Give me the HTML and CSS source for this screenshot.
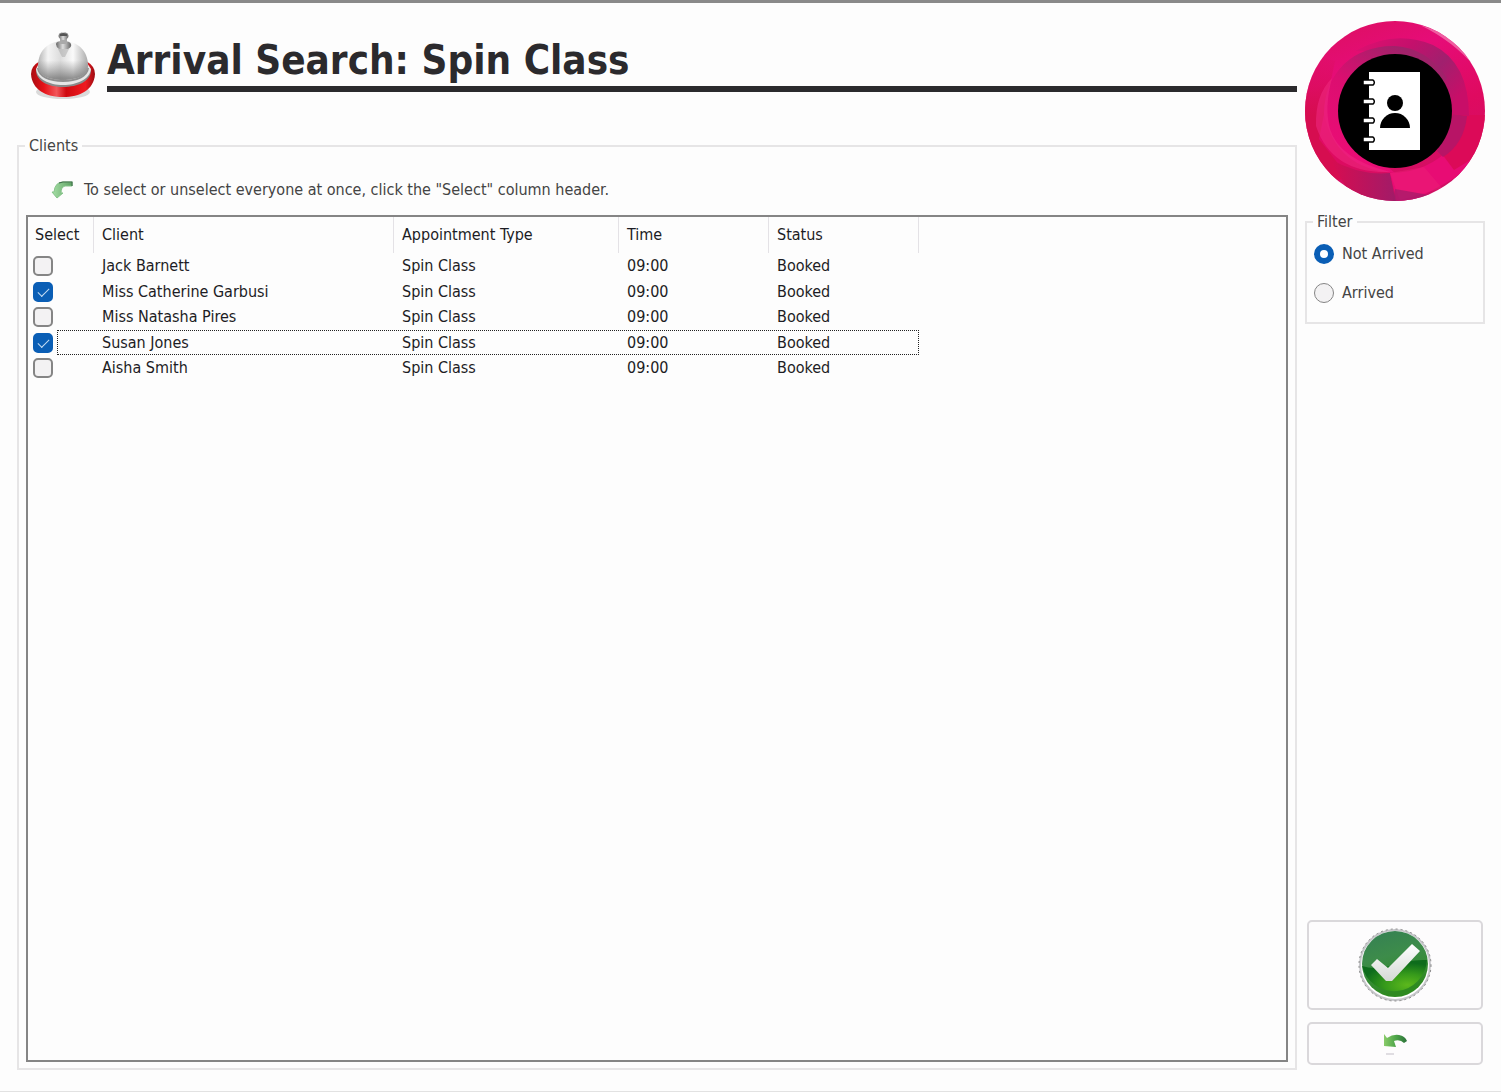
FILE: index.html
```html
<!DOCTYPE html>
<html lang="en">
<head>
<meta charset="utf-8">
<title>Arrival Search: Spin Class</title>
<link rel="stylesheet" href="styles.css">
</head>
<body>
<form class="window">
  <main class="content">
    <header class="heading">
      <svg class="bell" viewBox="0 0 70 72" aria-hidden="true">
        <defs>
          <linearGradient id="base" x1="0" x2="1"><stop offset="0" stop-color="#a80c12"/><stop offset=".2" stop-color="#e61218"/><stop offset=".4" stop-color="#f2565a"/><stop offset=".55" stop-color="#cf0a10"/><stop offset=".85" stop-color="#f01a20"/><stop offset="1" stop-color="#9c0c12"/></linearGradient>
          <linearGradient id="dome" x1="0" x2="1"><stop offset="0" stop-color="#b4b4b4"/><stop offset=".2" stop-color="#f4f4f4"/><stop offset=".45" stop-color="#dcdcdc"/><stop offset=".7" stop-color="#fafafa"/><stop offset="1" stop-color="#aaa"/></linearGradient>
          <linearGradient id="shade" x1="0" y1="0" x2="0" y2="1"><stop offset=".5" stop-color="#777" stop-opacity="0"/><stop offset=".95" stop-color="#666" stop-opacity=".7"/></linearGradient>
          <linearGradient id="knob" x1="0" x2="1"><stop offset="0" stop-color="#666"/><stop offset=".45" stop-color="#ddd"/><stop offset="1" stop-color="#666"/></linearGradient>
        </defs>
        <ellipse cx="35" cy="62" rx="27" ry="7" fill="#999" opacity=".35"/>
        <path d="M12 31Q3 36 3 44C4 60 18 67 35 67s31-7 32-23q0-8-9-13z" fill="url(#base)"/>
        <path d="M8 40c0 11 12 17 27 17s28-6 28-17l-4-6H11z" fill="#8a8a8a"/>
        <path d="M8 39c1 10 13 16 27 16s27-6 28-16l-4-6H11z" fill="#e6e6e6"/>
        <path d="M9 38c1 9 12 14 26 14s25-5 26-14z" fill="#8f8f8f"/>
        <path d="M10 36C10 20 21 11 35 11s25 9 25 25c0 9-11 14-25 14S10 45 10 36z" fill="url(#dome)"/>
        <path d="M10 36C10 20 21 11 35 11s25 9 25 25c0 9-11 14-25 14S10 45 10 36z" fill="url(#shade)"/>
        <path d="M30 19h11l-4 8h-3z" fill="#999" opacity=".4"/>
        <path d="M28 14q0-3 7-3t8 3-3 5h-9q-3-2-3-5z" fill="url(#knob)"/>
        <path d="M32 8h7v6h-7z" fill="#aaa"/>
        <ellipse cx="35.500" cy="6" rx="5" ry="4" fill="url(#knob)"/>
        <path d="M32 4q3-2 7 0v2h-7z" fill="#555"/>
      </svg>
      <h1 class="title">Arrival Search: Spin Class</h1>
    </header>
    <fieldset class="group clients">
      <legend>Clients</legend>
      <p class="hint">
        <svg class="hint-arrow" viewBox="0 0 24 20" aria-hidden="true">
          <defs><linearGradient id="bend" x1="0" x2="1"><stop offset="0" stop-color="#a6dfa6"/><stop offset="1" stop-color="#5da263"/></linearGradient></defs>
          <path d="M22 2v4h-7q-4 1-4 7h2l-6 5-5-6h2Q5 2 13 2z" fill="url(#bend)" stroke="#86c48a" stroke-width="1"/>
          <path d="M9 3l4-1h9v4" fill="none" stroke="#3e6f48" stroke-width="1.2"/>
        </svg>
        To select or unselect everyone at once, click the "Select" column header.
      </p>
      <div class="listbox">
        <table class="list">
          <colgroup><col class="col-select"><col class="col-client"><col class="col-type"><col class="col-time"><col class="col-status"></colgroup>
          <thead>
            <tr><th scope="col">Select</th><th scope="col">Client</th><th scope="col">Appointment Type</th><th scope="col">Time</th><th scope="col">Status</th></tr>
          </thead>
          <tbody>
            <tr><td><input type="checkbox" id="c1"></td><td><label for="c1">Jack Barnett</label></td><td>Spin Class</td><td>09:00</td><td>Booked</td></tr>
            <tr><td><input type="checkbox" id="c2" checked></td><td><label for="c2">Miss Catherine Garbusi</label></td><td>Spin Class</td><td>09:00</td><td>Booked</td></tr>
            <tr><td><input type="checkbox" id="c3"></td><td><label for="c3">Miss Natasha Pires</label></td><td>Spin Class</td><td>09:00</td><td>Booked</td></tr>
            <tr class="focused"><td><input type="checkbox" id="c4" checked></td><td><label for="c4">Susan Jones</label></td><td>Spin Class</td><td>09:00</td><td>Booked</td></tr>
            <tr><td><input type="checkbox" id="c5"></td><td><label for="c5">Aisha Smith</label></td><td>Spin Class</td><td>09:00</td><td>Booked</td></tr>
          </tbody>
        </table>
      </div>
    </fieldset>
  </main>
  <aside class="side">
    <svg class="badge" viewBox="0 0 180 180" role="img" aria-label="Contacts">
      <defs>
        <clipPath id="disc"><circle cx="90" cy="90" r="90"/></clipPath>
        <linearGradient id="pink" x1=".1" y1="0" x2=".5" y2="1"><stop offset="0" stop-color="#dc1060"/><stop offset=".3" stop-color="#e60c78"/><stop offset=".65" stop-color="#df0a60"/><stop offset="1" stop-color="#d01064"/></linearGradient>
        <linearGradient id="swirl" x1="0" y1="0" x2="1" y2=".6"><stop offset="0" stop-color="#e01070"/><stop offset=".4" stop-color="#c4106c"/><stop offset=".7" stop-color="#a0206e"/><stop offset="1" stop-color="#c80e68"/></linearGradient>
        <linearGradient id="left" x1="0" y1="1" x2=".6" y2="0"><stop offset="0" stop-color="#f00c78"/><stop offset=".6" stop-color="#dc0e70"/><stop offset="1" stop-color="#a0226a"/></linearGradient>
        <linearGradient id="foot" x1="0" y1="0" x2="1" y2="0"><stop offset="0" stop-color="#d80c50"/><stop offset="1" stop-color="#a11b68"/></linearGradient>
        <linearGradient id="edge" x1="0" y1="0" x2="0" y2="1"><stop offset="0" stop-color="#d60d50" stop-opacity="0"/><stop offset=".5" stop-color="#d60d50"/></linearGradient>
      </defs>
      <g clip-path="url(#disc)">
        <path d="M0 0h180v180H0z" fill="url(#pink)"/>
        <path d="M0 30L30 40 14 118 45 158 10 160 0 120z" fill="url(#edge)"/>
        <path d="M25 138q30 17 60 14l6 30H50z" fill="url(#foot)"/>
        <path d="M85 152q38 0 62-27l25 20-70 38-10-2z" fill="#e80c74"/>
        <path d="M85 152l34-6 18 21-42 12z" fill="#ed2378" opacity=".4"/>
        <path d="M88 182l2-14 34 6-20 8z" fill="#a01c68" opacity=".7"/>
        <path d="M148 94h32v36l-31 19-12-16z" fill="#dc0a58"/>
        <path d="M148 93l14 2q-3 28-24 41l-6-6z" fill="#b81466"/>
        <path d="M50 30Q90 8 128 24q36 18 36 71l-18-2-46-62z" fill="url(#swirl)"/>
        <path d="M19 92C20 50 50 24 90 25q32 2 52 32l-15 20-80 40 43 35Q30 148 19 92z" fill="url(#left)"/>
        <path d="M11 105Q10 74 27 57q-8 30-2 51 9 30 60 43-58 2-74-46z" fill="#ef2a82" opacity=".55"/>
        <path d="M115 4q40 11 55 42-22-26-55-42z" fill="#ef66a5" opacity=".9"/>
      </g>
      <circle cx="90" cy="90" r="57"/>
      <path d="M64 51h51v78H64z" fill="#fff"/>
      <g fill="#fff" stroke="#000" stroke-width="1.5">
        <path d="M58 59h10a3 3 0 0 1 0 5H58zM58 78h10a3 3 0 0 1 0 5H58zM58 97h10a3 3 0 0 1 0 5H58zM58 116h10a3 3 0 0 1 0 5H58z"/>
      </g>
      <circle cx="90" cy="82" r="8"/>
      <path d="M75 107a15 15 0 0 1 30 0z"/>
    </svg>
    <fieldset class="group filter">
      <legend>Filter</legend>
      <label class="choice"><input type="radio" name="filter" checked>Not Arrived</label>
      <label class="choice"><input type="radio" name="filter">Arrived</label>
    </fieldset>
    <div class="actions">
      <button class="action confirm" type="button" aria-label="Confirm">
        <svg width="74" height="74" viewBox="0 0 74 74" aria-hidden="true">
          <defs>
            <linearGradient id="green" x1="0" y1="0" x2=".3" y2="1"><stop offset="0" stop-color="#347f55"/><stop offset=".45" stop-color="#3d8c4a"/><stop offset="1" stop-color="#2e8a20"/></linearGradient>
            <radialGradient id="glow" cx=".7" cy=".8" r=".7"><stop offset="0" stop-color="#5cb81c"/><stop offset=".5" stop-color="#369a1b"/><stop offset="1" stop-color="#0e6c1c"/></radialGradient>
            <linearGradient id="tick" x1="0" y1="0" x2="0" y2="1"><stop offset="0" stop-color="#fff"/><stop offset="1" stop-color="#d5d9d5"/></linearGradient>
          </defs>
          <circle cx="37" cy="37" r="35" fill="#fff" stroke="#c6c6ca" stroke-width="2"/>
          <circle cx="37" cy="37" r="36" fill="none" stroke="#888" stroke-width="1" stroke-dasharray="2 3"/>
          <circle cx="37" cy="36" r="33" fill="url(#green)"/>
          <path d="M4 38q12 4 28 0 20-7 37-6A33 33 0 0 1 4 38z" fill="url(#glow)"/>
          <path d="M13 37l6-6 11 9 24-24 8 7-28 30h-6z" fill="url(#tick)"/>
        </svg>
      </button>
      <button class="action back" type="button" aria-label="Back">
        <svg width="26" height="24" viewBox="0 0 26 24" aria-hidden="true">
          <defs><linearGradient id="undo" x1="0" x2="1"><stop offset="0" stop-color="#8acb6a"/><stop offset=".5" stop-color="#4fa64a"/><stop offset="1" stop-color="#2b7139"/></linearGradient></defs>
          <path d="M2 2l3 4q6-4 12-3 6 1 8 6l-3 2q-4-4-10-2l2 6-12-1z" fill="url(#undo)"/>
          <path d="M4 22h8" stroke="#e0dde2" stroke-width="2"/>
        </svg>
      </button>
    </div>
  </aside>
</form>
</body>
</html>
```
FILE: styles.css
```css
* {
  box-sizing: border-box;
}

body {
  margin: 0;
  background: #fdfdfd;
  color: #444;
  font: 16px/20px "DejaVu Sans Condensed", Tahoma, "DejaVu Sans", sans-serif;
}

.window {
  display: grid;
  grid-template-columns: 1fr 180px;
  gap: 8px;
  min-height: 100vh;
  padding: 18px 16px 21px 17px;
  border-top: 3px solid #8a8a8a;
  border-bottom: 1px solid #e2e2e2;
}

.content,
.side {
  display: flex;
  flex-direction: column;
}

.heading {
  display: flex;
  gap: 9px;
  margin: 9px 0 34px 11px;
}

.bell {
  width: 70px;
  height: 72px;
}

.title {
  flex: 1;
  height: 62px;
  margin: 0;
  border-bottom: 6px solid #2b2a2d;
  color: #2b2a2d;
  font-size: 40px;
  line-height: 60px;
  white-space: nowrap;
}

.group {
  min-width: 0;
  margin: 0;
  border: 2px solid #e6e5e6;
}

.group legend {
  padding: 0 4px;
}

.clients {
  display: flex;
  flex: 1;
  flex-direction: column;
  padding: 24px 7px 6px;
}

.hint {
  display: flex;
  gap: 10px;
  align-items: center;
  margin: 0 0 15px 24px;
}

.hint-arrow {
  width: 24px;
  height: 20px;
}

.listbox {
  flex: 1;
  border: 2px solid #858585;
  background: #fdfdfd;
  color: #1c1c24;
}

.list {
  table-layout: fixed;
  width: 891px;
  border-collapse: separate;
  border-spacing: 0;
}

.col-select {
  width: 66px;
}

.col-client {
  width: 300px;
}

.col-type {
  width: 225px;
}

.col-time,
.col-status {
  width: 150px;
}

.list th {
  height: 36px;
  padding: 0 0 0 8px;
  border-right: 1px solid #e4e2e6;
  font-weight: normal;
  text-align: left;
}

.list th:first-child {
  padding-left: 7px;
}

.list td {
  height: 26px;
  padding: 0 0 0 8px;
}

.list tr:nth-child(even) td {
  height: 25px;
}

.list td:first-child {
  padding-left: 5px;
}

.focused {
  position: relative;
}

.focused td:first-child::after {
  position: absolute;
  inset: 0 0 0 29px;
  border: 1px dotted #222;
  content: "";
  pointer-events: none;
}

input {
  display: block;
  flex: none;
  width: 20px;
  height: 20px;
  margin: 0;
  border: 2px solid #858585;
  background: #f3f2f3;
  appearance: none;
}

input[type="checkbox"] {
  border-radius: 5px;
}

input[type="radio"] {
  border-width: 1px;
  border-radius: 50%;
}

input[type="checkbox"]:checked {
  border-color: #0a5eb5;
  background: #0a5eb5;
}

input[type="checkbox"]:checked::after {
  display: block;
  width: 10px;
  height: 5px;
  margin: 4px 3px;
  border: solid #c5ddf3;
  border-width: 0 0 1px 1px;
  content: "";
  transform: rotate(-45deg);
}

input[type="radio"]:checked {
  border: 6px solid #0a5eb5;
  background: #fff;
}

.filter {
  display: flex;
  flex-direction: column;
  gap: 19px;
  margin-top: 11px;
  padding: 12px 7px 19px;
}

.filter legend,
.clients legend {
  margin-left: -1px;
}

.choice {
  display: flex;
  gap: 8px;
  align-items: center;
}

.actions {
  display: flex;
  flex-direction: column;
  gap: 12px;
  margin: auto 2px 5px;
}

.action {
  display: flex;
  align-items: center;
  justify-content: center;
  padding: 0;
  border: 2px solid #dad8db;
  border-radius: 5px;
  background: #fdfcfd;
}

.confirm {
  height: 90px;
}

.back {
  height: 43px;
}
```
